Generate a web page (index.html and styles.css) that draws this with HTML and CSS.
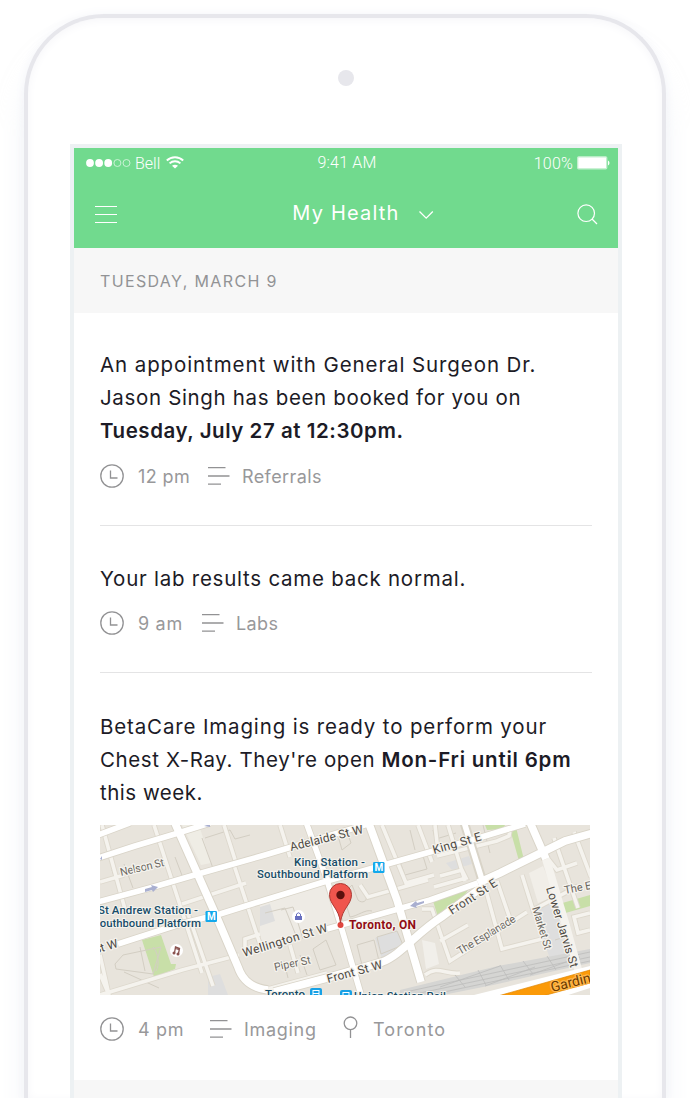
FILE: index.html
```html
<!DOCTYPE html>
<html lang="en">
<head>
<meta charset="utf-8">
<title>My Health</title>
<link rel="stylesheet" href="styles.css">
</head>
<body>
<div class="phone">
  <div class="camera"></div>
  <main class="screen">
    <header class="header">
      <div class="status">
        <div class="carrier">
          <svg width="46" height="10" viewBox="0 0 46 10"><g fill="#fff"><circle cx="4" cy="5" r="3.9"/><circle cx="13.1" cy="5" r="3.9"/><circle cx="22.2" cy="5" r="3.9"/></g><g fill="none" stroke="#d4f4dd" stroke-width=".9"><circle cx="31.4" cy="5" r="3.5"/><circle cx="40.5" cy="5" r="3.5"/></g></svg>
          <span class="bell">Bell</span>
          <svg class="wifi" width="18" height="13" viewBox="0 0 18 13"><g fill="none" stroke="#fff" stroke-width="1.9"><path d="M.8 4.5C5.4.1 12.600.1 17.200 4.500M3.600 7.400c3.100-2.900 7.700-2.900 10.800 0"/></g><path d="M6 9.800c1.700-1.500 4.300-1.500 6 0l-3 2.600z" fill="#fff"/></svg>
        </div>
        <span class="time">9:41 AM</span>
        <div class="power"><span>100%</span>
          <svg width="33" height="14" viewBox="0 0 33 14"><rect x=".7" y=".8" width="29" height="12" rx="1" fill="#fff" stroke="#c4efcf" stroke-width="1.3"/><path d="M31 4.500q1.500 .8 1.500 2.500T31 9.500z" fill="#fff"/></svg>
        </div>
      </div>
      <nav class="nav">
        <svg class="menu" width="24" height="20" viewBox="0 0 24 20"><path d="M1 1.500h22M1 9.500h22M1 17.500h22" stroke="#fff" stroke-width="1.200"/></svg>
        <div class="title"><h1>My Health</h1>
          <svg width="16" height="10" viewBox="0 0 16 10"><path d="M1.500 1.500 8.200 8.200 14.800 1.500" fill="none" stroke="#fff" stroke-width="1.300"/></svg>
        </div>
        <svg width="21" height="21" viewBox="0 0 21 21" fill="none" stroke="#fff" stroke-width="1.200"><circle cx="9.200" cy="9.200" r="8.300"/><path d="m15 15 5 5"/></svg>
      </nav>
    </header>
    <h2 class="day">TUESDAY, MARCH 9</h2>

    <article class="entry entry-booking">
      <p class="message"><span class="line l1">An appointment with General Surgeon Dr.</span><span class="line l2">Jason Singh has been booked for you on</span><strong class="line l3">Tuesday, July 27 at 12:30pm.</strong></p>
      <div class="meta">
        <svg class="clock" width="24" height="24" viewBox="0 0 24 24"><circle cx="12" cy="12" r="11.200"/><path d="M10.500 6.500v7.500h7"/></svg>
        <span class="hour">12 pm</span>
        <svg class="lines" width="22" height="18" viewBox="0 0 22 18"><path d="M0 .7h17.500M0 9h21.500M0 17.200h13"/></svg>
        <span class="tag referrals">Referrals</span>
      </div>
    </article>

    <article class="entry entry-labs">
      <p class="message"><span class="line l4">Your lab results came back normal.</span></p>
      <div class="meta">
        <svg class="clock" width="24" height="24" viewBox="0 0 24 24"><circle cx="12" cy="12" r="11.200"/><path d="M10.500 6.500v7.500h7"/></svg>
        <span class="hour am">9 am</span>
        <svg class="lines" width="22" height="18" viewBox="0 0 22 18"><path d="M0 .7h17.500M0 9h21.500M0 17.200h13"/></svg>
        <span class="tag">Labs</span>
      </div>
    </article>

    <article class="entry entry-imaging">
      <p class="message"><span class="line l5">BetaCare Imaging is ready to perform your</span><span class="line"><span class="l6">Chest X-Ray. They're open </span><strong class="l7">Mon-Fri until 6pm</strong></span><span class="line l8">this week.</span></p>
      <svg class="map" width="490" height="170" viewBox="0 0 490 170">
        <rect width="490" height="170" fill="#e8e4dc"/>
        <!-- blocks and parks -->
        <path d="M160 78 224 60l14 37-78 24z" fill="#eeebe5"/>
        <path d="m160 82 10-3 5 17-15 5zM108 152l12-3 8 21h-20zM346 38l23-7 3 8-20 6zM432 82l21-6 22 50-25 8zM275 113l22-7 7 18-22 10z" fill="#dedede"/>
        <path d="m429 48 14-7 12 30-17 7z" fill="#f1eee8"/>
        <path d="m82 0 17 0 12 38-10 2z" fill="#efede5"/>
        <path d="m322 115 13 3 4 21-13 5z" fill="#f1efea"/>
        <g fill="#c8dfa8"><path d="m42 115 19-5 10 29 5 0-1 5-21 8z"/><path d="m333 76 35-11-6 9-24 18zM385 0h20l-2 4-16 1zM410 4l6-2 8 33-5 1zM459 79l31-9v11l-28 8z"/></g>
        <!-- building outlines -->
        <g fill="none" stroke="#d3cec3" stroke-width="1">
          <path d="m102 13 12 33 36-10m-45-23 25-8 5 9 15-4M15 139l8-9 38-8-8 27-37-5zM24 147l35 16M40 122l5 24M53 122c5 5 7 18 3 24"/>
          <path d="m165 88 20-5 12 30M181 85l12-3 10 32M246 66l6-6 6 15c4 4 10 1 8-4M246 79l4 13c8-1 15-8 22-6M226 115l10 25-16 5-7-21zM184 136l4 17M200 130l7 20M257 120l17-5 5 21-17 4zM277 112l20-6 6 14-22 9zM237 7l9-3 5 14-9 7z"/>
          <path d="m12 45 8 24M24 39l9 24M75 32l8 21M131 17l6 19M300 37l23-6 4 13-22 6zM310 5l5 20M336 14l20-6M383 0l7 28M455 115l13-4M333 5l4 16"/>
        </g>
        <g fill="none" stroke="#ddd8cd" stroke-width="5.400">
          <path d="m2 0 24 88M54 0l48 148M124 0l13 41M0 57l24-7M0 149l12 28M86 83l27 78M82 79l64-21M0 170l82-25 57-15M133 37l30 91M145 125l0-11 15-5M180 0l10 32M282 0l24 58 28-8M260 60l8 12 60-17M318 0l14 37M348 0l17 56M337 31l60-15 12-5 2-12M334 62l32-9-4-8-22 6M322 84l10 0 18 52 77-49M340 116l28-16M385 62l17 62 40-10M397 56l13 38M422 50l11 35 45-24M445 30l12 15 20-7M454 13l24 70M474 7l17 45M490 88l-16 4 4 16 12-3M325 150c13-10 20 0 35-2M160 166l67-18M190 120l8 28M0 130l9 40M335 0l3 26"/>
        </g>
        <g fill="none" stroke="#f5f3ee" stroke-width="3.600">
          <path d="m2 0 24 88M54 0l48 148M124 0l13 41M0 57l24-7M0 149l12 28M86 83l27 78M82 79l64-21M0 170l82-25 57-15M133 37l30 91M145 125l0-11 15-5M180 0l10 32M282 0l24 58 28-8M260 60l8 12 60-17M318 0l14 37M348 0l17 56M337 31l60-15 12-5 2-12M334 62l32-9-4-8-22 6M322 84l10 0 18 52 77-49M340 116l28-16M385 62l17 62 40-10M397 56l13 38M422 50l11 35 45-24M445 30l12 15 20-7M454 13l24 70M474 7l17 45M490 88l-16 4 4 16 12-3M325 150c13-10 20 0 35-2M160 166l67-18M190 120l8 28M0 130l9 40M335 0l3 26"/>
        </g>
        <!-- railway corridor -->
        <path d="m300 170 0-5 98-24 92-17v14l-97 22-50 10z" fill="#d5d5d3"/>
        <path d="m310 166 180-39M320 168l170-36M330 170l160-34M355 150l10 12M378 145l8 15M400 140l9 15M423 136l10 13M447 131l9 14M470 127l8 14M340 162l60-21M385 161l50-19M430 150l50-18" fill="none" stroke="#bdbdbb" stroke-width=".8"/>
        <!-- main roads -->
        <g fill="none" stroke="#d9d4c8" stroke-linejoin="round">
          <path stroke-width="7.200" d="M-2 10 30-2M-2 33 35 21 75 9l35-11M-2 77 50 63l55-16 60-17 50-15 56-17M18 119l62-20 40-10 45-14 62-19 103-29 45-13 50-15M206-3l21 58 13 43 22 75M227 104l50-14 53-15 48-17"/>
          <path stroke-width="9.500" d="M174 167l53-14 55-16c19-7 34-29 61-46l42-31M378 58l22-10 65-32 28-8M74-4l24 54 20 45 20 47c5 15 15 21 30 23M268-4l29 79 24 82M364-3l19 61M429-5l17 39"/>
        </g>
        <g fill="none" stroke="#fff" stroke-linejoin="round">
          <path stroke-width="5.600" d="M-2 10 30-2M-2 33 35 21 75 9l35-11M-2 77 50 63l55-16 60-17 50-15 56-17M18 119l62-20 40-10 45-14 62-19 103-29 45-13 50-15M206-3l21 58 13 43 22 75M227 104l50-14 53-15 48-17M364-3l19 61"/>
          <path stroke-width="7.600" d="M174 167l53-14 55-16c19-7 34-29 61-46l42-31M378 58l22-10 65-32 28-8M74-4l24 54 20 45 20 47c5 15 15 21 30 23M268-4l29 79 24 82M429-5l17 39"/>
          <path stroke="#f5f3ee" stroke-width="8" d="m446 34 20 67 13 47"/>
        </g>
        <path d="m366 172 124-31v4l-92 27zM439 172l51-14v5l-28 9z" fill="#fff"/>
        <path d="m398 171 92-26v13l-51 14z" fill="#fb9a08" stroke="#e08500" stroke-width=".7"/>
        <g fill="#a9afd0"><path d="m45 64 7-2-1-2 7 2-5 5-1-2-7 2zM104 1l6-2v3zM324 76l-7 2-1-2-6 5 7 2-1-2 8-3zM0 34l2-3v4z"/></g>
        <!-- place markers -->
        <g><circle cx="76.500" cy="125.500" r="6.500" fill="#fff"/><path d="m74.500 128 1-6 4 1.500-1 5M75.500 123.500l4 1.200" fill="none" stroke="#8a534f" stroke-width="1.300"/><circle cx="74" cy="128" r="1.500" fill="#8a534f"/><circle cx="78" cy="129" r="1.500" fill="#8a534f"/></g>
        <g><circle cx="198.500" cy="91.500" r="6.500" fill="#fff"/><path d="M195 91h7v4h-7z" fill="#6970c0"/><path d="M196.500 91v-2q2-2.500 4 0v2" fill="none" stroke="#6970c0"/></g>
        <g class="metro"><rect x="105.500" y="86" width="11.500" height="11" rx="1.200"/><text x="107" y="95.300">M</text><rect x="273" y="37" width="11.500" height="11" rx="1.200"/><text x="274.500" y="46.300">M</text></g>
        <g fill="#17a1e6"><rect x="210" y="163" width="12" height="12" rx="2"/><rect x="240" y="165" width="12" height="12" rx="2"/></g>
        <g fill="none" stroke="#fff"><rect x="213" y="165.500" width="6" height="6"/><path d="M213 168.500h6"/><rect x="243" y="167.500" width="6" height="6"/></g>
        <!-- street names -->
        <g class="street">
          <text transform="translate(191 26) rotate(-14)" textLength="75">Adelaide St W</text>
          <text transform="translate(334 29) rotate(-16)" textLength="50">King St E</text>
          <text class="small" transform="translate(21 51) rotate(-13)" textLength="45">Nelson St</text>
          <text transform="translate(144 132) rotate(-17)" textLength="88">Wellington St W</text>
          <text class="small" transform="translate(175 146) rotate(-12)" textLength="37">Piper St</text>
          <text transform="translate(228 158) rotate(-15)" textLength="57">Front St W</text>
          <text transform="translate(352 90) rotate(-33)" textLength="55">Front St E</text>
          <text class="small" transform="translate(360 130) rotate(-31)" textLength="66">The Esplanade</text>
          <text class="small" transform="translate(465 69) rotate(-11)">The Esplanade</text>
          <text transform="translate(446 63) rotate(73)" textLength="84">Lower Jarvis St</text>
          <text class="small" transform="translate(432 83) rotate(73)" textLength="44">Market St</text>
          <text transform="translate(-5 129) rotate(-17)">St W</text>
          <text class="highway" transform="translate(452 167) rotate(-14)">Gardiner</text>
        </g>
        <g class="station">
          <text x="-2" y="88.500" textLength="100">St Andrew Station -</text><text x="-7" y="101.500" textLength="108">Southbound Platform</text>
          <text x="194" y="40.500" textLength="71">King Station -</text><text x="157" y="53" textLength="111">Southbound Platform</text>
          <text x="165" y="173" textLength="40">Toronto</text><text x="254" y="175" textLength="92">Union Station Rail</text>
        </g>
        <circle cx="240.500" cy="100" r="3" fill="#df463e"/>
        <path d="M240.500 98c-1.500-15-11-18-11-28.500a11 11 0 0 1 22 0C251.500 80 242 83 240.500 98z" fill="#f0554d" stroke="#ad3933" stroke-width="1"/>
        <circle cx="240.500" cy="70" r="4.200" fill="#5b100d"/>
        <text class="city" x="249" y="104" textLength="67">Toronto, ON</text>
      </svg>
      <div class="meta">
        <svg class="clock" width="24" height="24" viewBox="0 0 24 24"><circle cx="12" cy="12" r="11.200"/><path d="M10.500 6.500v7.500h7"/></svg>
        <span class="hour four">4 pm</span>
        <svg class="lines" width="22" height="18" viewBox="0 0 22 18"><path d="M0 .7h17.500M0 9h21.500M0 17.200h13"/></svg>
        <span class="tag imaging">Imaging</span>
        <svg class="pin" width="15" height="23" viewBox="0 0 15 23"><circle cx="7.500" cy="7.300" r="6.300"/><path d="M7.500 13.600V22"/></svg>
        <span class="tag place">Toronto</span>
      </div>
    </article>
    <div class="next-day"></div>
  </main>
</div>
</body>
</html>
```
FILE: styles.css
```css
* { box-sizing: border-box; }
body { margin: 0; height: 1098px; overflow: hidden; padding: 14px 24px 0; background: #fff; font-family: Inter, "Open Sans", sans-serif; }
svg { display: block; flex: none; }
h1, h2, p { margin: 0; font-weight: 400; }
.phone { height: 1084px; width: 642px; border: 4px solid #e7e7ec; border-bottom: 0; border-radius: 80px 80px 0 0; background: #fff; padding: 52px 42px 0; box-shadow: 0 30px 26px 0 #e9eef480, 0 0 12px #f5f6fa, inset 0 2px 10px #f6f6f9; }
.camera { width: 16px; height: 16px; border-radius: 50%; background: #e7e7ec; margin: 0 0 58px 268px; }
.screen { width: 552px; height: 954px; border: 4px solid #edf1f3; border-bottom: 0; background: #fff; }
.header { height: 100px; background: #71da8e; color: #fff; }
.status { height: 30px; display: grid; grid-template-columns: 1fr auto 1fr; align-items: center; padding: 0 8px 0 12px; font: 300 16px Roboto, sans-serif; }
.carrier, .power { display: flex; align-items: center; }
.bell { margin: 0 6px 0 3px; }
.wifi { margin-top: -2px; }
.time { letter-spacing: .2px; margin: -1px 2px 0 0; }
.power { justify-content: flex-end; gap: 4px; }
.power span { letter-spacing: .2px; }
.power svg { margin-top: -1px; }
.nav { height: 70px; padding: 5px 20px 3px; display: grid; grid-template-columns: 1fr auto 1fr; align-items: center; }
.nav > :last-child { justify-self: end; }
.menu { margin-top: 2px; }
.title { display: flex; align-items: center; gap: 18px; margin: -2px 0 0 34px; }
.title h1 { font-size: 20px; font-weight: 400; letter-spacing: 1.2px; }
.title svg { margin-top: 3px; }
.day { height: 65px; padding: 1px 26px 0; background: #f7f7f7; color: #929395; font-size: 16px; line-height: 65px; letter-spacing: 1.35px; font-weight: 400; }
.entry { margin: 0 26px; }
.entry-booking { height: 213px; padding-top: 35px; border-bottom: 1px solid #e4e4e5; }
.entry-labs { height: 147px; padding-top: 36px; border-bottom: 1px solid #e4e4e5; }
.entry-imaging { height: 407px; padding-top: 37px; }
.message { font-size: 20.5px; line-height: 33px; color: #1c1b26; font-weight: 400; white-space: nowrap; }
.message strong { font-weight: 600; }
.line { display: block; }
.l1 { letter-spacing: .9px; }
.l2 { letter-spacing: .66px; }
.l3 { letter-spacing: .55px; }
.l4 { letter-spacing: .75px; }
.l5 { letter-spacing: .85px; }
.l6 { letter-spacing: .6px; }
.l7 { letter-spacing: .78px; }
.l8 { letter-spacing: .5px; }
.meta { display: flex; align-items: center; height: 24px; margin-top: 16px; color: #98989a; font-size: 18px; font-weight: 400; line-height: 24px; }
.entry-booking .meta { margin-top: 17px; }
.meta svg { fill: none; stroke: #929294; stroke-width: 1.3; }
.hour { width: 55px; margin: 2px 15px 0 14px; letter-spacing: .4px; white-space: nowrap; }
.am { width: 49px; letter-spacing: .7px; }
.four { width: 57px; letter-spacing: .7px; }
.tag { margin: 2px 0 0 12px; letter-spacing: .4px; }
.imaging { letter-spacing: .7px; width: 73px; }
.pin { margin: -4px 0 0 26px; }
.place { margin-left: 15px; letter-spacing: 1.1px; }
.map { margin: 16px 0 6px; overflow: hidden; }
.map + .meta { margin-top: 22px; }
.map text { font-family: Roboto, sans-serif; font-size: 12px; }
.street text { fill: #4d4943; stroke: #f5f3ee; stroke-width: 2.5px; paint-order: stroke; stroke-linejoin: round; }
.map .small { font-size: 11px; fill: #6b6761; }
.map .highway { font-size: 14px; fill: #6b3a00; stroke: #ffb84e; }
.map .station text { font-size: 11.5px; font-weight: 500; fill: #174c68; stroke: #f5f3ee; stroke-width: 2px; paint-order: stroke; }
.metro rect { fill: #12a8ec; }
.map .metro text { fill: #fff; font-size: 10px; font-weight: 700; }
.map .city { font-size: 12px; font-weight: 700; fill: #910d13; stroke: #f5f3ee; stroke-width: 2px; paint-order: stroke; }
.next-day { height: 18px; background: #f7f7f7; }
```
